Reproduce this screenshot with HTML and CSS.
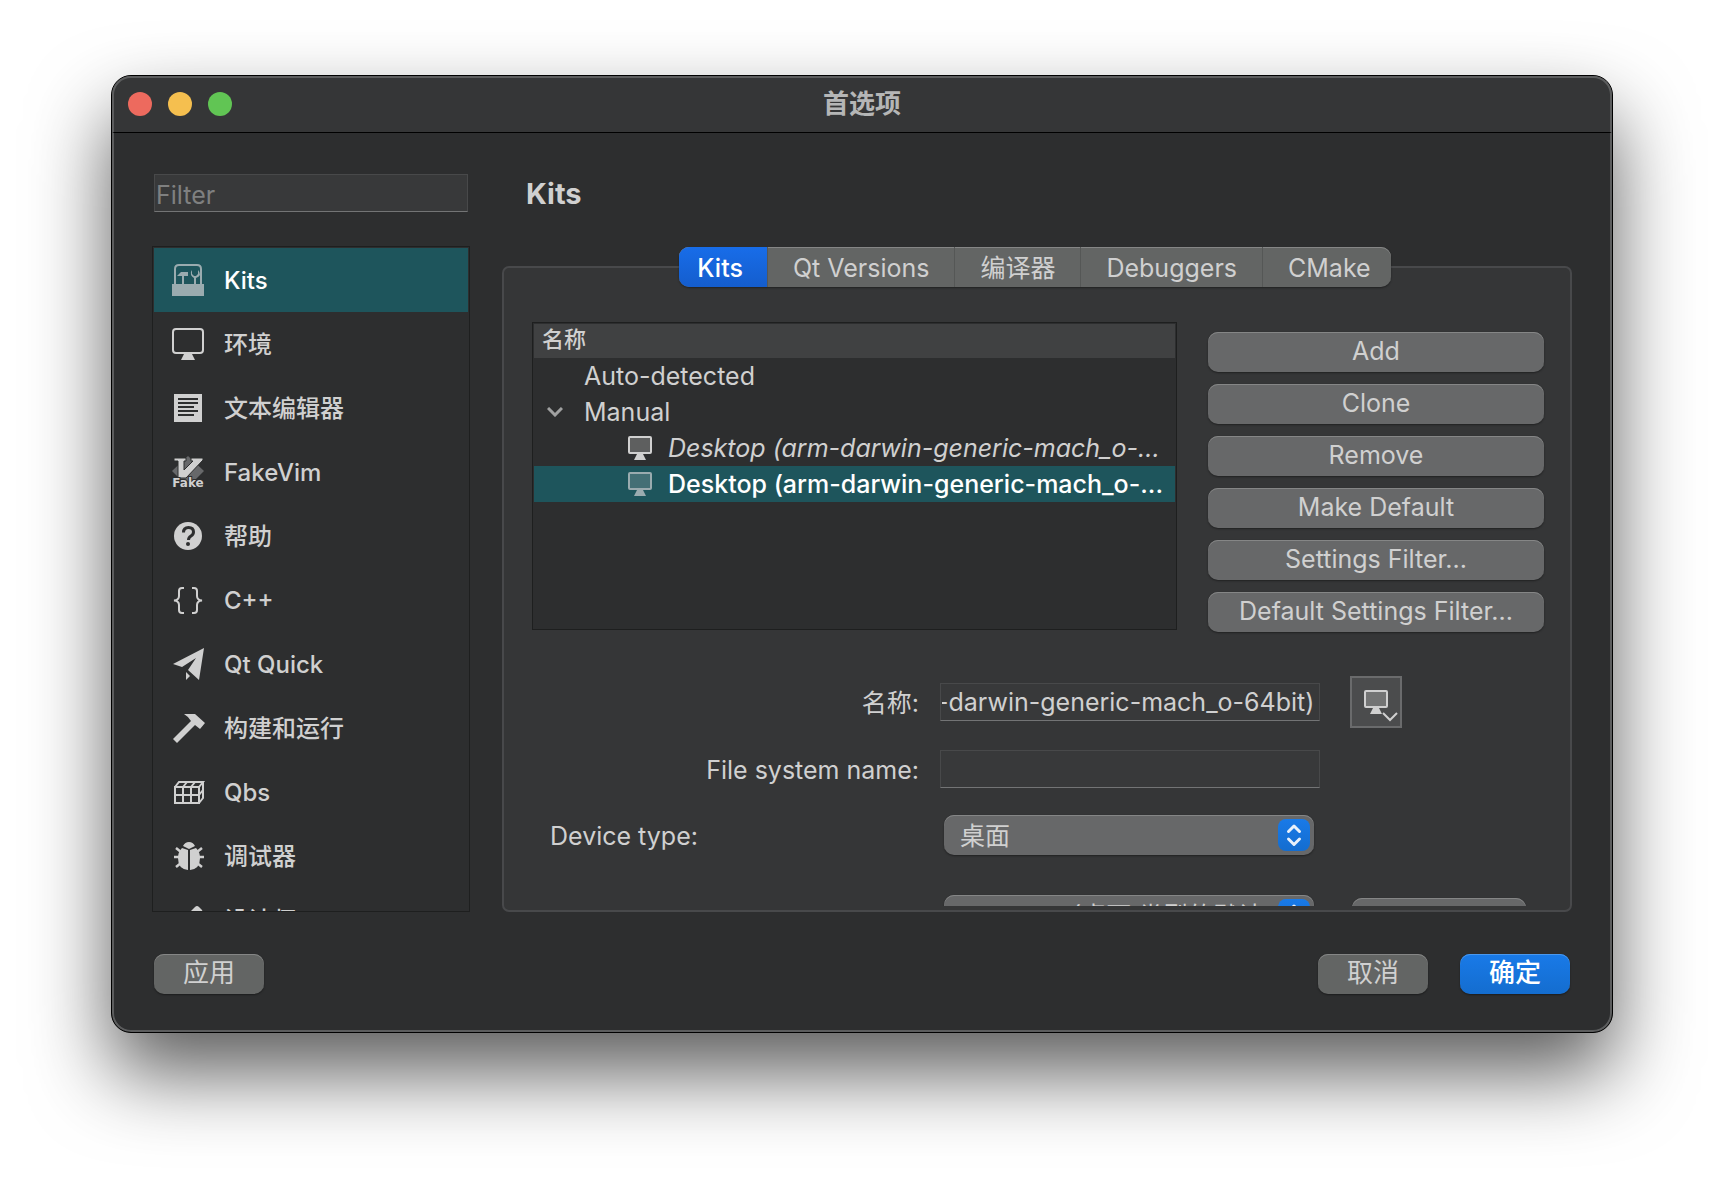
FILE: index.html
```html
<!DOCTYPE html>
<html lang="zh-CN">
<head>
<meta charset="utf-8">
<title>首选项</title>
<link rel="stylesheet" href="styles.css">
</head>
<body>
<svg class="sprite" aria-hidden="true">
  <symbol id="screen" viewBox="0 0 24 24">
    <rect x="1" y="1" width="22" height="16" rx="1" fill="currentColor" fill-opacity=".3" stroke="currentColor" stroke-width="2"/>
    <path d="M9 18h6l3 6H6z" fill="currentColor"/>
  </symbol>
  <symbol id="updown" viewBox="0 0 32 32">
    <path d="M10.500 12.500 16 7l5.500 5.500M10.500 20 16 25.500 21.500 20" fill="none" stroke="currentColor" stroke-width="3" stroke-linecap="round" stroke-linejoin="round"/>
  </symbol>
</svg>
<main class="window">
  <header class="titlebar">
    <div class="lights"><i class="light red"></i><i class="light yellow"></i><i class="light green"></i></div>
    <h1 class="title">首选项</h1>
  </header>
  <div class="body">
    <aside class="side">
      <input class="field filter" type="text" placeholder="Filter" aria-label="Filter">
      <nav class="list">
        <a class="item selected" href="#kits">
          <svg class="icon" viewBox="0 0 32 32"><path d="M3 20V5q0-4 4-4h18q4 0 4 4v15" fill="none" stroke="currentColor" stroke-width="2"/><path d="M0 20h32v12H0zM5 12l4-4h7v4h-4v8h-2v-8z" fill="currentColor"/><path d="M20 6q-2 2-1 5 1 2 3 3v6h2v-6q3-1 4-3 0-3-2-5v4l-2 2h-2l-2-2z" fill="currentColor"/></svg>
          <span>Kits</span></a>
        <a class="item" href="#env">
          <svg class="icon" viewBox="0 0 32 32"><rect x="1" y="1" width="30" height="24" rx="3" fill="none" stroke="currentColor" stroke-width="2"/><path d="M12 26h8l3 6H9z" fill="currentColor"/></svg>
          <span>环境</span></a>
        <a class="item" href="#editor">
          <svg class="icon" viewBox="0 0 32 32"><path fill="currentColor" fill-rule="evenodd" d="M2 2h28v28H2zM6 6v2h20V6zM6 10v2h20v-2zM6 14v2h16v-2zM6 18v2h20v-2zM6 22v2h16v-2z"/></svg>
          <span>文本编辑器</span></a>
        <a class="item" href="#fakevim">
          <svg class="icon" viewBox="0 0 32 32"><path d="M16 0 32 15 22 25H10L0 15z" fill="#67686a"/><path d="M2 2h12v3h-2v9l9-9h-2V2h12v2L14 22H6V5H2z" fill="currentColor" stroke="#2d2e2f" stroke-width="1"/><text class="icon-text" x="16" y="31">Fake</text></svg>
          <span>FakeVim</span></a>
        <a class="item" href="#help">
          <svg class="icon" viewBox="0 0 32 32"><circle cx="16" cy="16" r="14" fill="currentColor"/><path d="M11.500 12.500q0-5 5-5t5 4.500q0 2.500-2.500 4t-2.500 4" fill="none" stroke="#2d2e2f" stroke-width="3"/><circle cx="16" cy="24" r="2" fill="#2d2e2f"/></svg>
          <span>帮助</span></a>
        <a class="item" href="#cpp">
          <svg class="icon" viewBox="0 0 32 32"><path d="M12 4H10Q7 4 7 7V12Q7 16 2 16.500 7 17 7 21V26Q7 29 10 29H12M20 4H22Q25 4 25 7V12Q25 16 30 16.500 25 17 25 21V26Q25 29 22 29H20" fill="none" stroke="currentColor" stroke-width="2"/></svg>
          <span>C++</span></a>
        <a class="item" href="#qtquick">
          <svg class="icon" viewBox="0 0 32 32"><path d="M32 0 27 32 16 22 24 10 10 19 1 16zM14 24l4 4-4 4z" fill="currentColor"/></svg>
          <span>Qt Quick</span></a>
        <a class="item" href="#build">
          <svg class="icon" viewBox="0 0 32 32"><path d="M12 2h11l10 9-5 6-5-4L5 31l-4-4L19 9q-2-4-7-7z" fill="currentColor"/></svg>
          <span>构建和运行</span></a>
        <a class="item" href="#qbs">
          <svg class="icon" viewBox="0 0 32 32"><path d="M3 11h24v16H3zM11 11v16M19 11v16M3 19h24M3 11l4-5h24l-4 5M11 11l4-5M19 11l4-5M31 6v16l-4 5M27 19l4-5" fill="none" stroke="currentColor" stroke-width="2"/></svg>
          <span>Qbs</span></a>
        <a class="item" href="#debugger">
          <svg class="icon" viewBox="0 0 32 32"><path d="M11 6q2-4 6-4t6 4l-6 3zM16 10v20Q6 29 6 18q0-6 4-10zM18 10v20q10-1 10-12 0-6-4-10z" fill="currentColor"/><path d="M4 8l5 4M2 17h6M4 27l5-4M30 8l-5 4M32 17h-6M30 27l-5-4" stroke="currentColor" stroke-width="2.500"/></svg>
          <span>调试器</span></a>
        <a class="item" href="#designer">
          <svg class="icon" viewBox="0 0 32 32"><path d="M23 3q2-2 4 0l3 3q1 2-1 4L10 28l-8 2 2-8z" fill="currentColor"/></svg>
          <span>设计师</span></a>
      </nav>
    </aside>
    <section class="content">
      <h2 class="heading">Kits</h2>
      <div class="tabs" role="tablist">
        <button class="tab active" role="tab" aria-selected="true">Kits</button>
        <button class="tab" role="tab">Qt Versions</button>
        <button class="tab" role="tab">编译器</button>
        <button class="tab" role="tab">Debuggers</button>
        <button class="tab" role="tab">CMake</button>
      </div>
      <div class="panel">
        <div class="kits">
          <div class="tree" role="tree">
            <div class="tree-head">名称</div>
            <div class="row" role="treeitem">Auto-detected</div>
            <div class="row" role="treeitem"><svg class="chevron" viewBox="0 0 16 10"><path d="M1 1l7 7 7-7" fill="none" stroke="currentColor" stroke-width="3"/></svg>Manual</div>
            <div class="row kit italic" role="treeitem"><svg class="screen"><use href="#screen"/></svg><span>Desktop (arm-darwin-generic-mach_o-...</span></div>
            <div class="row kit picked" role="treeitem"><svg class="screen"><use href="#screen"/></svg><span>Desktop (arm-darwin-generic-mach_o-...</span></div>
          </div>
          <div class="actions">
            <button class="button">Add</button>
            <button class="button">Clone</button>
            <button class="button">Remove</button>
            <button class="button">Make Default</button>
            <button class="button">Settings Filter...</button>
            <button class="button">Default Settings Filter...</button>
          </div>
        </div>
        <form class="form">
          <label class="label" for="kit-name">名称:</label>
          <input class="field name" id="kit-name" type="text" value="-darwin-generic-mach_o-64bit)">
          <button class="tool" type="button" aria-label="Icon">
            <svg class="screen"><use href="#screen"/></svg>
            <svg class="drop" viewBox="0 0 16 10"><path d="M1 1l7 7 7-7" fill="none" stroke="currentColor" stroke-width="2"/></svg>
          </button>
          <label class="label" for="fs-name">File system name:</label>
          <input class="field" id="fs-name" type="text">
          <label class="label start" for="device-type">Device type:</label>
          <div class="combo"><select class="select" id="device-type"><option>桌面</option></select><svg class="stepper"><use href="#updown"/></svg></div>
          <div class="combo low"><select class="select" aria-label="Device"><option>Local PC (桌面 类型的默认)</option></select><svg class="stepper"><use href="#updown"/></svg></div>
          <button class="button manage" type="button" aria-label="Manage"></button>
        </form>
      </div>
    </section>
  </div>
  <footer class="footer">
    <button class="button small apply">应用</button>
    <button class="button small">取消</button>
    <button class="button small primary">确定</button>
  </footer>
</main>
</body>
</html>
```
FILE: styles.css
```css
* { box-sizing: border-box; }

body {
  margin: 0;
  min-height: 100vh;
  padding: 75px 111px 147px;
  background: #fff;
  color: #d0d0d0;
  font: 25px/36px Inter, "Noto Sans CJK SC", sans-serif;
  display: flex;
  overflow: hidden;
}

button, input, select { font: inherit; color: inherit; margin: 0; }
h1, h2 { margin: 0; }
.sprite { display: none; }

.window {
  flex: 1;
  min-width: 0;
  display: flex;
  flex-direction: column;
  border: 1px solid #000;
  border-radius: 20px;
  background: #2d2e2f;
  box-shadow: inset 0 0 0 2px #5c5d5e, 0 40px 80px rgba(0, 0, 0, .64);
}

.titlebar {
  height: 57px;
  display: grid;
  grid-template-columns: 1fr auto 1fr;
  align-items: center;
  padding: 0 14px 2px;
  border: 2px solid #5c5d5e;
  border-bottom: 1px solid #000;
  border-radius: 19px 19px 0 0;
  background: #353637;
}
.lights { display: flex; gap: 16px; }
.light { width: 24px; height: 24px; border-radius: 50%; }
.red { background: #ed6a5e; }
.yellow { background: #f5bf4f; }
.green { background: #61c554; }
.title { font-size: 26px; font-weight: 700; color: #b5b6b6; }

.body {
  flex: 1;
  min-height: 0;
  display: grid;
  grid-template-columns: 318px minmax(0, 1fr);
  gap: 32px;
  padding: 41px 40px 0;
}

.field {
  height: 38px;
  width: 100%;
  padding: 0 1px;
  border: 1px solid #48494a;
  border-bottom: 1px solid #737475;
  border-radius: 0;
  background: #38393a;
  outline: 0;
}
.field::placeholder { color: #7f8080; opacity: 1; }

.side { display: flex; flex-direction: column; gap: 34px; min-height: 0; height: 738px; }
.filter { width: 314px; margin-left: 2px; padding-top: 3px; }
.list {
  flex: 1;
  min-height: 0;
  overflow: hidden;
  border: 1px solid #1e1f1f;
  padding: 1px 1px 0;
}
.item {
  height: 64px;
  display: flex;
  align-items: center;
  gap: 20px;
  padding-left: 18px;
  color: #d0d0d0;
  font-size: 24px;
  font-weight: 500;
  text-decoration: none;
}
.item span { padding-top: 2px; }
.item.selected { background: #1e555c; color: #fff; }
.icon { width: 32px; height: 32px; color: #d0d0d0; flex: none; overflow: visible; }
.selected .icon { color: #9aabaf; }
.icon-text { font: 700 12px "DejaVu Sans", sans-serif; text-anchor: middle; fill: #d0d0d0; stroke: #2d2e2f; stroke-width: 2px; paint-order: stroke; }

.content { display: flex; flex-direction: column; min-width: 0; height: 738px; }
.heading { font-size: 29px; line-height: 40px; font-weight: 700; padding-left: 24px; margin-bottom: 33px; }

.tabs {
  align-self: center;
  position: relative;
  z-index: 1;
  display: flex;
  height: 40px;
  margin: 0 4px -21px 0;
  border-radius: 10px;
  background: #636564;
  box-shadow: inset 0 1px #858686, 0 1px 2px rgba(0, 0, 0, .4);
  overflow: hidden;
}
.tab {
  padding: 1px 25px 0;
  border: 0;
  border-left: 1px solid #555756;
  background: none;
  white-space: nowrap;
}
.tab:last-child { padding-right: 20px; }
.tab.active { padding: 1px 24px 0 18px; background: linear-gradient(#186de9, #145dcd); color: #fff; border: 0; font-weight: 500; }

.panel {
  flex: 1;
  min-height: 0;
  display: flex;
  flex-direction: column;
  gap: 44px;
  padding: 54px 26px 0 28px;
  border: 2px solid #48494b;
  border-radius: 7px;
  background: #353637;
}
.kits { display: grid; grid-template-columns: minmax(0, 1fr) 336px; gap: 31px; }
.tree { height: 308px; border: 1px solid #1e1f1f; padding: 1px; background: #2d2e2f; }
.tree-head { height: 34px; padding-left: 8px; background: #404142; font-size: 22px; line-height: 30px; font-weight: 500; }
.row { position: relative; height: 36px; padding-left: 50px; white-space: nowrap; overflow: hidden; }
.kit { display: flex; align-items: center; gap: 16px; padding-left: 94px; }
.italic { font-style: italic; }
.picked { background: #1e555c; color: #fff; font-weight: 500; }
.screen { width: 24px; height: 24px; flex: none; color: #d0d0d0; }
.picked .screen { color: #9aabaf; }
.chevron { position: absolute; left: 13px; top: 13px; width: 16px; height: 10px; color: #a0a1a1; }

.actions { display: flex; flex-direction: column; gap: 12px; padding-top: 10px; }
.button {
  height: 40px;
  padding: 0 0 2px;
  border: 0;
  border-radius: 10px;
  background: #676869;
  box-shadow: inset 0 1px #858686, 0 1px 2px rgba(0, 0, 0, .4);
  line-height: 36px;
}
.small { width: 110px; background: #636564; font-size: 26px; }
.primary { background: linear-gradient(#197ae8, #146dcf); box-shadow: inset 0 1px #4a98ee, 0 1px 2px rgba(0, 0, 0, .4); color: #fff; font-weight: 500; }

.form {
  flex: 1;
  min-height: 0;
  overflow: hidden;
  display: grid;
  grid-template-columns: minmax(0, 1fr) 380px 185px;
  grid-template-rows: 52px 38px 50px 53px;
  row-gap: 22px;
  column-gap: 21px;
  align-items: center;
  margin-bottom: 4px;
  padding-right: 18px;
}
.label { padding-top: 2px; text-align: right; }
.label.start { grid-column: 1; text-align: left; padding-left: 18px; }
.name { text-align: right; text-indent: -5px; padding-right: 6px; }
.tool {
  position: relative;
  width: 52px;
  height: 52px;
  margin-left: 9px;
  padding: 0;
  border: 2px solid #6a6b6c;
  background: #4b4c4d;
}
.tool .screen { display: block; margin: 0 auto; }
.drop { position: absolute; right: 2px; bottom: 4px; width: 16px; height: 10px; }
.combo { display: flex; align-items: center; width: 370px; margin-left: 4px; }
.select {
  appearance: none;
  flex: none;
  width: 100%;
  height: 40px;
  padding: 2px 16px 0;
  border: 0;
  border-radius: 10px;
  background: #676869;
  box-shadow: inset 0 1px #858686, 0 1px 2px rgba(0, 0, 0, .4);
}
.stepper { flex: none; width: 32px; height: 32px; margin-left: -36px; border-radius: 8px; background: linear-gradient(#197ae8, #146dcf); color: #e8f0fa; pointer-events: none; }
.combo.low { grid-column: 2; align-self: end; }
.manage { align-self: start; margin: 16px 0 0 11px; }

.footer { display: flex; gap: 32px; padding: 42px 42px 38px; }
.apply { margin-right: auto; }
```
